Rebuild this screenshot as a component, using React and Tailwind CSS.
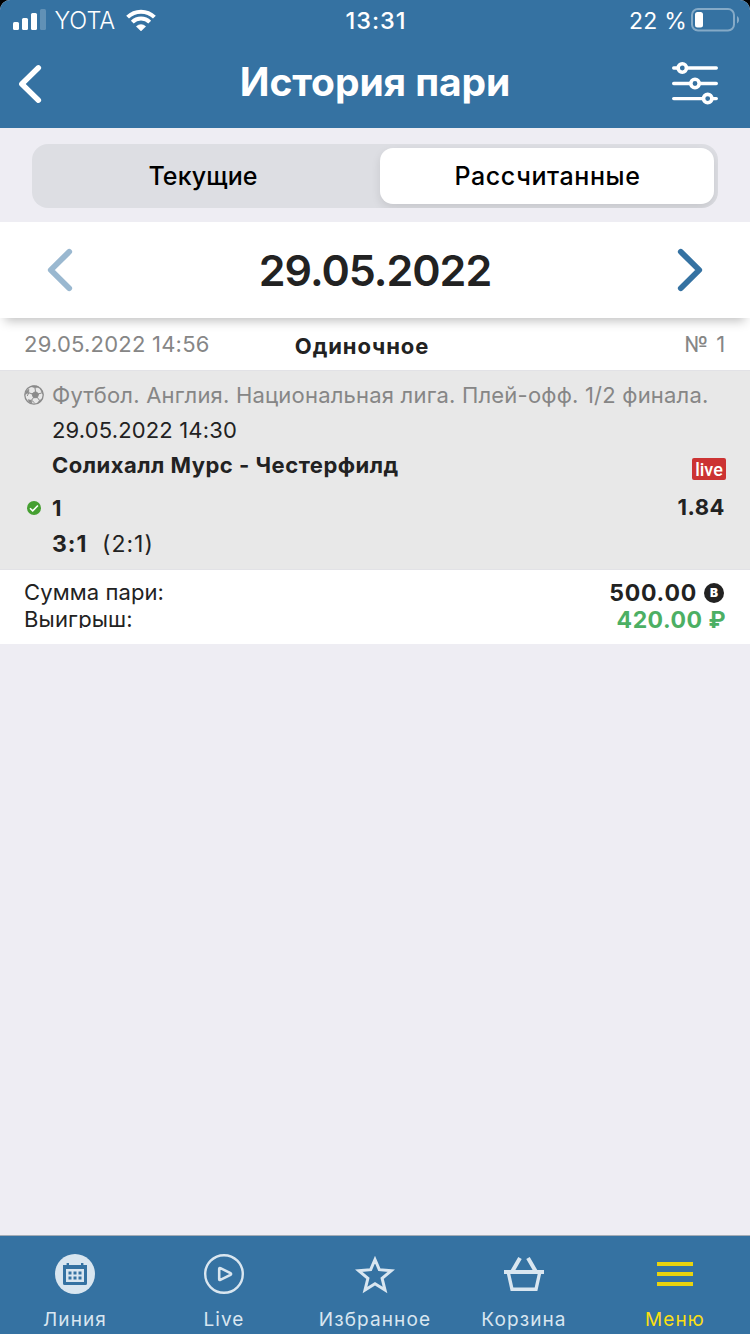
import React from "react";

function Chevron({ dir, className }) {
  return (
    <svg width="26" height="44" viewBox="0 0 26 44" fill="none" stroke="currentColor" strokeWidth="5.8" strokeLinecap="round" strokeLinejoin="round" className={className}>
      <path d={dir === "left" ? "M22.2 3.8 3.8 22 22.2 40.2" : "M3.800 3.800 22.200 22 3.800 40.200"} />
    </svg>
  );
}

function StatusBar() {
  return (
    <div className="flex h-10 items-center justify-between pl-[13px] pr-[11px] text-white">
      <div className="flex w-[310px] items-center">
        <svg width="33" height="22" viewBox="0 0 33 22" fill="currentColor">
          <rect x="0" y="13" width="6" height="8" rx="1.5" />
          <rect x="9" y="9" width="6" height="12" rx="1.5" />
          <rect x="18" y="4" width="6" height="17" rx="1.5" />
          <rect x="27" y="0" width="6" height="21" rx="1.5" opacity="0.22" />
        </svg>
        <span className="ml-[8.5px] w-[63.5px] pt-[2px] text-[23.5px] font-light">YOTA</span>
        <svg width="30" height="23" viewBox="0 0 30 23" className="ml-[8px]" fill="none" stroke="currentColor" strokeWidth="4">
          <path d="M1.6 8.2a19 19 0 0 1 26.8 0" />
          <path d="M6.3 13.2a12.3 12.3 0 0 1 17.4 0" />
          <path d="M15 22 10.3 17.500a6.800 6.800 0 0 1 9.400 0Z" fill="currentColor" strokeWidth="0.5" />
        </svg>
      </div>
      <span className="pt-[2px] text-[23.5px] font-medium tracking-[1px]">13:31</span>
      <div className="flex w-[310px] items-center justify-end">
        <span className="mr-[4px] pt-[2px] text-[23px] tracking-[0.2px]">22 %</span>
        <svg width="48" height="24" viewBox="0 0 48 24" fill="none">
          <rect x="1" y="1" width="42" height="21.5" rx="6" stroke="white" strokeOpacity="0.4" strokeWidth="2" />
          <rect x="4" y="4" width="8" height="15.5" rx="2.5" fill="white" />
          <path d="M46 8v7.5c1.4-.7 2-2 2-3.700s-.6-3.100-2-3.800Z" fill="white" fillOpacity="0.4" />
        </svg>
      </div>
    </div>
  );
}

function NavBar() {
  return (
    <div className="flex h-[88px] items-center justify-between pl-[17px] pr-[32px] text-white">
      <div className="w-[120px]">
        <svg width="26" height="40" viewBox="0 0 26 40" fill="none" stroke="currentColor" strokeWidth="5.4" strokeLinecap="round" strokeLinejoin="round">
          <path d="M21.400 3.800 4.800 20 21.400 36.200" />
        </svg>
      </div>
      <h1 className="mt-[-3px] text-[39px] font-bold tracking-[-0.1px]">История пари</h1>
      <div className="flex w-[105px] justify-end">
        <svg width="46" height="44" viewBox="0 0 46 44" fill="none" stroke="white" strokeWidth="3.400" strokeLinecap="round">
          <path d="M1.700 6h42.600M1.700 21.500h42.600M1.700 36.600h42.600" />
          <g fill="#3572a2" strokeWidth="3.600">
            <circle cx="10.300" cy="6" r="4.200" />
            <circle cx="23" cy="21.500" r="4.200" />
            <circle cx="35.700" cy="36.600" r="4.200" />
          </g>
        </svg>
      </div>
    </div>
  );
}

function Segmented() {
  return (
    <div className="h-[94px] px-8 pt-4">
      <div className="flex h-16 overflow-hidden rounded-[16px] bg-[#dddee3] p-1 text-[25px] font-medium text-black">
        <div className="flex w-[344px] items-center justify-center pr-[10px] pt-[2px]">
          <span className="tracking-[0.1px]">Текущие</span>
        </div>
        <div className="flex w-[334px] items-center justify-center rounded-[13px] bg-white pl-px pt-[2px] shadow-[0_4px_10px_rgba(0,0,0,0.1)]">
          <span className="tracking-[0.6px]">Рассчитанные</span>
        </div>
      </div>
    </div>
  );
}

function SoccerBall() {
  return (
    <svg width="20" height="20" viewBox="0 0 20 20" fill="#8b8b8b" stroke="#8b8b8b" strokeWidth="1">
      <circle cx="10" cy="10" r="9.200" fill="none" strokeWidth="1.300" />
      <path d="m11.500 6.500 3.200 2.300-1.300 3.800-4 .100-1.400-3.900Z" />
      <path d="M11.500 6.500 11 3M14.700 8.800l3-.8M13.400 12.600l2 2.600M9.400 12.700l-1.800 2.500M8 8.800 4.800 7.800M7.600 15.200l3 2.700M4.800 7.800 3.200 11" fill="none" />
      <path d="M7 1.500 11 3l3.800-1-2-1.200H8ZM17.700 7.800 16.500 4l2 2.400.7 3ZM15.400 15.200l2.600-1-2.600 3.200-2 .8ZM7.600 15.200 4 14.600l1 2.400 3 1.500ZM4.800 7.800 5 4 2 6.500 1 9.500Z" strokeWidth=".4" />
    </svg>
  );
}

function BetCard() {
  return (
    <div className="text-[#222]">
      <div className="flex h-[52px] items-center justify-between bg-white px-6 text-[22px]">
        <span className="w-[270px] tracking-[0.22px] text-[#868686]">29.05.2022 14:56</span>
        <span className="mt-1 font-bold tracking-[0.9px]">Одиночное</span>
        <span className="w-[296px] text-right text-[#868686] tracking-[0.9px]">№ 1</span>
      </div>
      <div className="h-[200px] border-y border-[#e2e2e6] bg-[#e8e8e8] px-6 pt-[7px] text-[22px]">
        <div className="flex h-[35px] items-center whitespace-nowrap text-[#868686]">
          <div className="w-[28px] shrink-0 pb-px"><SoccerBall /></div>
          <span className="tracking-[0.2px]">Футбол. Англия. Национальная лига. Плей-офф. 1/2 финала.</span>
        </div>
        <div className="flex h-[35px] items-center pl-[28px] tracking-[0.15px]">29.05.2022 14:30</div>
        <div className="flex h-[35px] items-center justify-between pl-[28px]">
          <span className="font-bold tracking-[0.5px]">Солихалл Мурс - Честерфилд</span>
          <span className="mt-[7px] flex h-[22px] w-[34px] items-center justify-center rounded-[2px] bg-[#cc3333] font-['Roboto'] text-[18px] font-medium text-white">live</span>
        </div>
        <div className="mt-[7px] flex h-[35px] items-center font-bold">
          <svg width="28" height="14" viewBox="0 0 28 14">
            <circle cx="10" cy="7" r="7" fill="#459f31" />
            <path d="m6 7.200 2.700 2.700 5.200-5.400" fill="none" stroke="white" strokeWidth="1.600" />
          </svg>
          <span className="pt-[2px]">1</span>
          <span className="ml-auto mr-px tracking-[0.5px]">1.84</span>
        </div>
        <div className="mt-[2px] flex h-[35px] items-center pl-[28px] text-[23px]">
          <span className="w-[50px] font-bold tracking-[1px]">3:1</span>
          <span className="tracking-[1px]">(2:1)</span>
        </div>
      </div>
      <div className="h-[74px] bg-white px-6 pt-[9px] text-[22px]">
        <div className="flex h-[27px] items-center justify-between">
          <span className="tracking-[0.1px]">Сумма пари:</span>
          <span className="flex items-center font-bold">
            <span className="pt-[2px] text-[23px] tracking-[0.8px]">500.00</span>
            <span className="ml-[7px] mr-[2px] flex size-5 items-center justify-center rounded-full bg-[#222] text-[12px] font-black text-white">B</span>
          </span>
        </div>
        <div className="flex h-[22px] justify-between leading-[27px]">
          <span className="overflow-hidden tracking-[0.15px]">Выигрыш:</span>
          <span className="pt-px text-[23px] font-bold tracking-[0.5px] text-[#4caf64]">420.00 ₽</span>
        </div>
      </div>
    </div>
  );
}

function Tab({ label, active, children }) {
  return (
    <div className={active ? "flex flex-col items-center text-[#fbdf12]" : "flex flex-col items-center text-[#d9e6f0]"}>
      <svg width="40" height="40" viewBox="0 0 40 40" fill="none" stroke="currentColor">{children}</svg>
      <span className="mt-[11px] text-[19px] leading-[30px] tracking-[1.1px]">{label}</span>
    </div>
  );
}

function TabBar() {
  return (
    <div className="grid h-[99px] grid-cols-[150px_148px_154px_144px_158px] border-t border-[#a3acb6] bg-[#3572a2] pt-[18px]">
      <Tab label="Линия">
        <circle cx="20" cy="20" r="20" fill="currentColor" stroke="none" />
        <path d="M8 11h24v18.500q0 1.500-1.500 1.500h-21Q8 31 8 29.500ZM11.600 9H14v3h-2.400ZM26 9h2.400v3H26Z" fill="#3572a2" stroke="none" />
        <path d="M11 15h18v13H11Z" fill="currentColor" stroke="none" />
        <path d="M13.500 17.500h3v3h-3ZM18.500 17.500h3v3h-3ZM23.500 17.500h3v3h-3ZM13.500 22.500h3v3h-3ZM18.500 22.500h3v3h-3ZM23.500 22.500h3v3h-3Z" fill="#3572a2" stroke="none" />
      </Tab>
      <Tab label="Live">
        <circle cx="20" cy="20" r="18.800" strokeWidth="2.400" />
        <path d="M15.200 14.800v10.400q0 1.200 1.200.7l10-4.900q1.400-1 0-2l-10-4.900q-1.200-.5-1.200.7Z" strokeWidth="2.600" />
      </Tab>
      <Tab label="Избранное">
        <path d="m20 5.500 4.300 10.200 12 1-9.200 7.700 2.900 11.600L20 29.800 10 36l2.900-11.600-9.200-7.700 12-1Z" strokeWidth="3" />
      </Tab>
      <Tab label="Корзина">
        <path d="M0 18h40M8.500 17 16 4M31.500 17 24 4" strokeWidth="4" />
        <path d="M4.500 19.500 8 35.300h24l3.500-15.800" strokeWidth="3.400" />
      </Tab>
      <Tab label="Меню" active>
        <path d="M2 10h36M2 20h36M2 30h36" strokeWidth="4" stroke="#e9d30f" />
      </Tab>
    </div>
  );
}

export default function App() {
  return (
    <div className="bg-black font-['Inter',sans-serif]">
      <div className="flex h-[1334px] w-[750px] flex-col overflow-hidden rounded-t-[10px] bg-[#eeedf3]">
        <header className="bg-[#3572a2]">
          <StatusBar />
          <NavBar />
        </header>
        <Segmented />
        <div className="relative flex h-24 items-center justify-between bg-white px-[47px] shadow-[0_8px_10px_-5px_rgba(0,0,0,0.25)]">
          <Chevron dir="left" className="text-[#9ab8d0]" />
          <span className="text-[43px] font-semibold tracking-[-1px] text-[#222]">29.05.2022</span>
          <Chevron dir="right" className="text-[#3572a2]" />
        </div>
        <BetCard />
        <div className="flex-1" />
        <TabBar />
      </div>
    </div>
  );
}
